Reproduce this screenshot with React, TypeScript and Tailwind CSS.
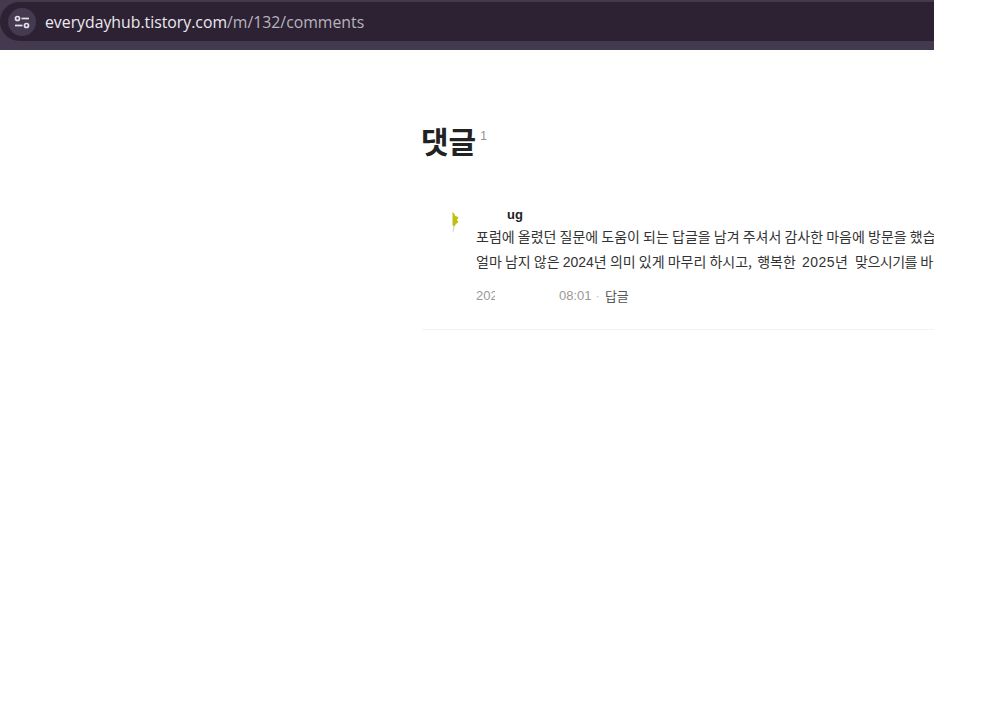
export default function App() {
  const kr = { fontFamily: '"Noto Sans CJK KR", "Liberation Sans", sans-serif' };
  const latin = { fontFamily: '"Liberation Sans", sans-serif' };
  return (
    <div className="h-[714px] w-full overflow-hidden bg-white" style={kr}>
      <div className="w-[934px] overflow-hidden">
        <header className="h-[50px] bg-[#443a4f] pt-[2px]">
          <div className="flex h-[39px] items-center rounded-l-[20px] bg-[#2c2233] pl-[8px]">
            <div className="flex h-[28px] w-[28px] items-center justify-center rounded-full bg-[#453b50]">
              <svg width="16" height="16" viewBox="0 0 16 16" fill="none" stroke="#e6e1e9" strokeWidth="1.7">
                <circle cx="3.5" cy="4.5" r="2" />
                <path d="M7.5 4.5H15" />
                <circle cx="12.5" cy="11.5" r="2" />
                <path d="M1 11.5H8.5" />
              </svg>
            </div>
            <div className="ml-[9px] whitespace-nowrap pt-[2px] text-[15.8px]" style={{ fontFamily: '"Open Sans", sans-serif' }}>
              <span className="text-[#ece9ee]">everydayhub.tistory.com</span>
              <span className="text-[#b9b2bf]">/m/132/comments</span>
            </div>
          </div>
        </header>
        <main className="pl-[422px]">
          <div className="flex pt-[68px]">
            <h1 className="ml-[-1px] text-[30px] leading-[44px] font-bold text-[#222222]">댓글</h1>
            <span className="ml-[4px] pt-[10px] text-[12px] leading-[16px] text-[#909090]" style={latin}>1</span>
          </div>
          <article className="mt-[44px] border-b border-[#f3f3f3] pb-[24px]">
            <div className="flex h-[18px] items-start">
              <svg className="ml-[29px] mt-[2px] shrink-0" width="12" height="26" viewBox="0 0 12 26">
                <path d="M1.5 4 L3.5 6 L4 8 L7.5 9 L6 12 L7.5 14 L5 16 L3 19 L1.5 17 Z" fill="#c3bd17" />
                <path d="M3 19 L2 23.5" stroke="#c9c9c0" strokeWidth="1" />
              </svg>
              <span className="ml-[44px] text-[13px] leading-[18px] font-bold text-[#222222]" style={latin}>ug</span>
            </div>
            <div className="ml-[54px] whitespace-nowrap text-[14px] leading-[25px] text-[#333333]">
              <p>포럼에 올렸던 질문에 도움이 되는 답글을 남겨 주셔서 감사한 마음에 방문을 했습니다.</p>
              <p>
                얼마 남지 않은 <span style={latin}>2024</span>년 의미 있게 마무리 하시고, <span className="ml-[2px]">행복한</span> <span className="ml-[3px] tracking-[0.5px]" style={latin}>2025</span>년 <span className="ml-[4px] tracking-[-0.5px]">맞으시기를</span> 바랍니다.
              </p>
            </div>
            <div className="ml-[54px] mt-[12px] flex items-center text-[13px] leading-[18px]" style={latin}>
              <span className="w-[19px] overflow-hidden text-[#999999]">2024</span>
              <span className="ml-[64px] text-[#999999]">08:01</span>
              <span className="mx-[4px] text-[#c4c4c4]">·</span>
              <span className="ml-[1px] text-[13px] text-[#555555]" style={kr}>답글</span>
            </div>
          </article>
        </main>
      </div>
    </div>
  );
}
